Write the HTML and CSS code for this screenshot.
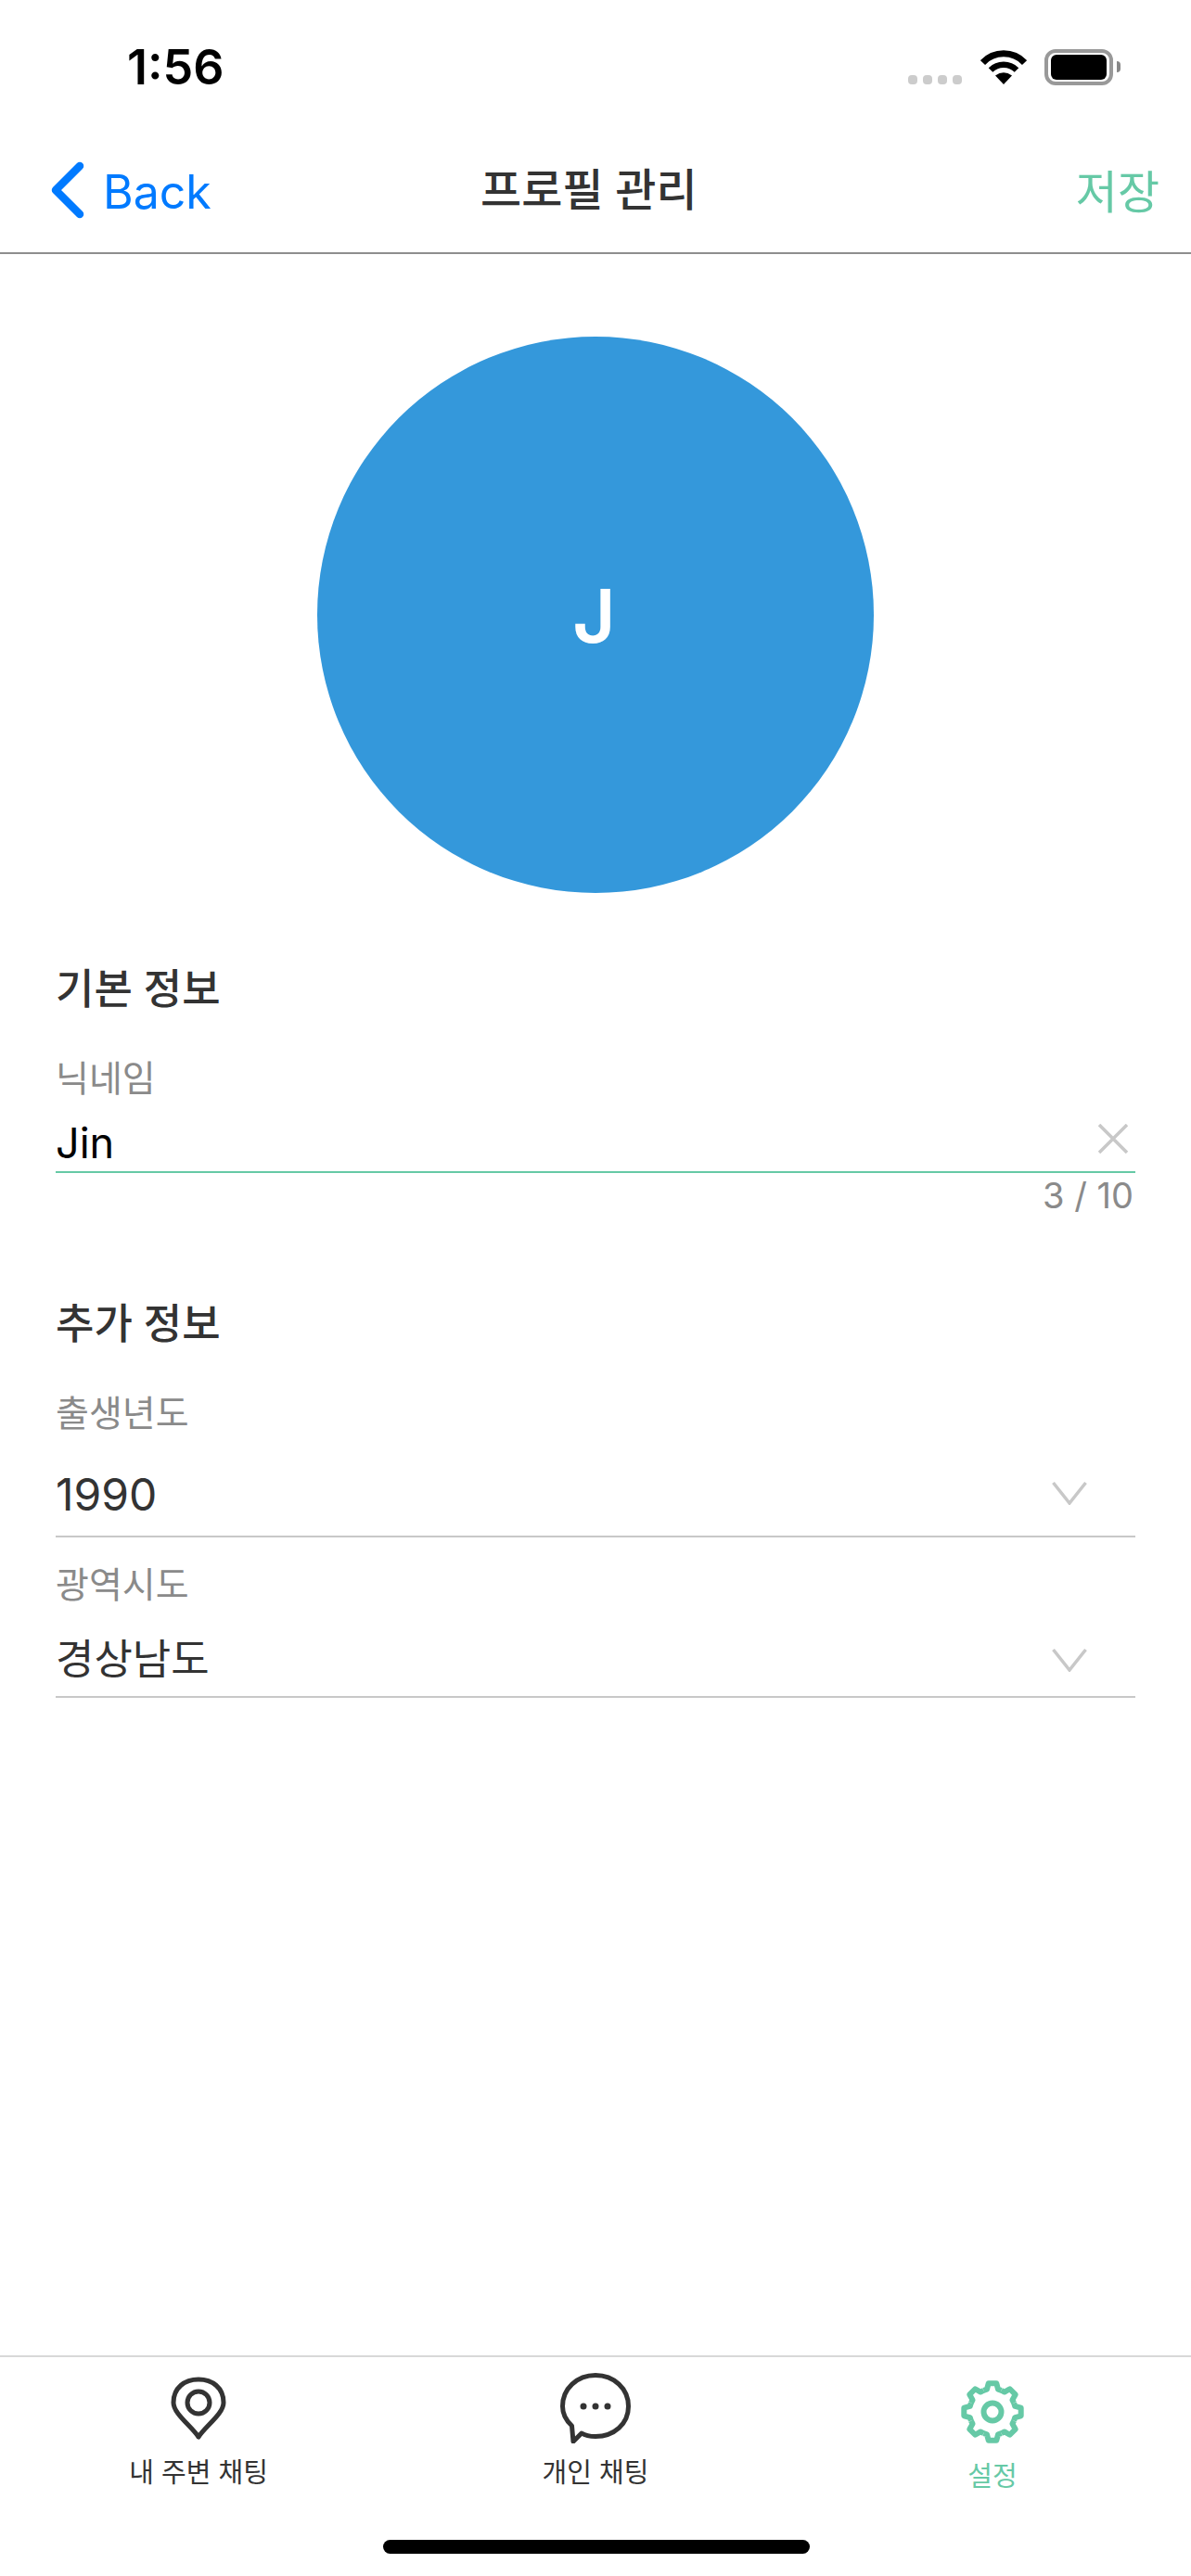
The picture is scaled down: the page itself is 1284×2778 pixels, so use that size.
FILE: index.html

```html
<html>
  <head>
    <meta http-equiv="Content-Type" content="text/html; charset=UTF-8" />
    <title>프로필 관리</title>
    <link rel="stylesheet" href="styles.css">
  </head>
  <body>
  <div class="screen">
    <div class="status">
      <span class="time">1:56</span>
      <div class="status-icons">
        <div class="signal"><i></i><i></i><i></i><i></i></div>
        <svg class="wifi" width="50" height="37" viewBox="0 0 50 37">
          <path d="M2.5 13.5 A31 31 0 0 1 47.5 13.5" fill="none" stroke="#000" stroke-width="7"/>
          <path d="M11 21.5 A20 20 0 0 1 39 21.5" fill="none" stroke="#000" stroke-width="6.5"/>
          <path d="M25 37 L16 27.5 Q25 21 34 27.5 Z" fill="#000"/>
        </svg>
        <div class="battery"><div class="battery-fill"></div></div>
        <div class="battery-nub"></div>
      </div>
    </div>

    <div class="nav">
      <a class="back">
        <svg width="36" height="62" viewBox="0 0 36 62">
          <path d="M31 5 L5 31 L31 57" fill="none" stroke="#007aff" stroke-width="8.500" stroke-linecap="round" stroke-linejoin="round"/>
        </svg>
        <span>Back</span>
      </a>
      <h1 class="title">프로필 관리</h1>
      <a class="save">저장</a>
    </div>

    <div class="avatar-row">
      <div class="avatar">J</div>
    </div>

    <div class="form">
      <h2 class="section first">기본 정보</h2>
      <div class="label nick-label">닉네임</div>
      <div class="input active">
        <span class="value black">Jin</span>
        <svg class="clear" width="34" height="32" viewBox="0 0 34 32">
          <path d="M2 1 L32 31 M32 1 L2 31" fill="none" stroke="#c8c8c8" stroke-width="3.500"/>
        </svg>
      </div>
      <div class="counter">3 / 10</div>

      <h2 class="section">추가 정보</h2>
      <div class="label birth-label">출생년도</div>
      <div class="input select birth">
        <span class="value">1990</span>
        <svg class="chevron" width="38" height="26" viewBox="0 0 38 26">
          <path d="M1.5 2 L19 24 L36.5 2" fill="none" stroke="#c8c8c8" stroke-width="3.500"/>
        </svg>
      </div>
      <div class="label region-label">광역시도</div>
      <div class="input select region">
        <span class="value">경상남도</span>
        <svg class="chevron" width="38" height="26" viewBox="0 0 38 26">
          <path d="M1.5 2 L19 24 L36.5 2" fill="none" stroke="#c8c8c8" stroke-width="3.500"/>
        </svg>
      </div>
    </div>

    <div class="tabs">
      <div class="tab">
        <div class="tab-icon">
          <svg width="60" height="68" viewBox="0 0 60 68">
            <path d="M30 65 C22 53 3 40 3 28 C3 12 15 3 30 3 C45 3 57 12 57 28 C57 40 38 53 30 65 Z" fill="none" stroke="#333" stroke-width="5" stroke-linejoin="round"/>
            <circle cx="30" cy="28" r="12" fill="none" stroke="#333" stroke-width="5"/>
          </svg>
        </div>
        <span>내 주변 채팅</span>
      </div>
      <div class="tab">
        <div class="tab-icon">
          <svg width="76" height="76" viewBox="0 0 76 76">
            <path d="M14 74 L12.5 57 C6 51 2.500 44 2.500 36 C2.500 17 18 2.500 38 2.500 C58 2.500 73.500 17 73.500 36 C73.500 55 58 68.500 38 68.500 C32 68.500 27 67.500 23 65 Z" fill="none" stroke="#333" stroke-width="5" stroke-linejoin="round"/>
            <circle cx="25" cy="36" r="3.500" fill="#333"/>
            <circle cx="38" cy="36" r="3.500" fill="#333"/>
            <circle cx="51" cy="36" r="3.500" fill="#333"/>
          </svg>
        </div>
        <span>개인 채팅</span>
      </div>
      <div class="tab on">
        <div class="tab-icon">
          <svg width="68" height="68" viewBox="0 0 68 68">
            <defs>
              <polyline id="tooth" points="-9.57,-23.1 -6.05,-24.26 -4.3,-30.7 4.3,-30.7 6.05,-24.26 9.57,-23.1" fill="none" stroke="#66c9a6" stroke-width="6" stroke-linejoin="round"/>
            </defs>
            <g transform="translate(34 34)">
              <use href="#tooth"/>
              <use href="#tooth" transform="rotate(45)"/>
              <use href="#tooth" transform="rotate(90)"/>
              <use href="#tooth" transform="rotate(135)"/>
              <use href="#tooth" transform="rotate(180)"/>
              <use href="#tooth" transform="rotate(225)"/>
              <use href="#tooth" transform="rotate(270)"/>
              <use href="#tooth" transform="rotate(315)"/>
              <circle r="9.500" fill="none" stroke="#66c9a6" stroke-width="6"/>
            </g>
          </svg>
        </div>
        <span>설정</span>
      </div>
    </div>
    <div class="home-bar"></div>
  </div>
  </body>
</html>
```

FILE: styles.css

```css
body {
  margin: 0;
  background: #fff;
  font-family: Inter, "Noto Sans CJK KR", sans-serif;
  color: #333;
}
h1, h2 {
  margin: 0;
  font-weight: 500;
}
.screen {
  width: 1284px;
  height: 2778px;
  display: flex;
  flex-direction: column;
  overflow: hidden;
}

/* status bar */
.status {
  height: 132px;
  display: flex;
  justify-content: space-between;
  box-sizing: border-box;
  padding: 43px 76px 0 137px;
}
.time {
  font-size: 52px;
  font-weight: 600;
  line-height: 60px;
  color: #000;
}
.status-icons {
  display: flex;
  height: 40px;
  margin-top: 10px;
}
.signal {
  display: flex;
  gap: 6px;
  margin-top: 28px;
  margin-right: 20px;
}
.signal i {
  width: 10px;
  height: 10px;
  border-radius: 4px;
  background: #ccc;
}
.wifi {
  margin-top: 1px;
  margin-right: 19px;
}
.battery {
  width: 74px;
  height: 39px;
  box-sizing: border-box;
  border: 4px solid #999;
  border-radius: 12px;
  padding: 2px 3px;
}
.battery-fill {
  height: 100%;
  background: #000;
  border-radius: 6px;
}
.battery-nub {
  width: 4px;
  height: 12px;
  margin: 13px 0 0 4px;
  background: #888;
  border-radius: 0 6px 6px 0;
}

/* nav */
.nav {
  height: 142px;
  box-sizing: border-box;
  border-bottom: 2px solid #8e8e8e;
  display: grid;
  grid-template-columns: 463px 1fr auto;
  align-items: center;
  padding: 0 34px 0 55px;
}
.back {
  display: flex;
  align-items: center;
  gap: 20px;
  color: #007aff;
  font-size: 50px;
  padding-top: 6px;
}
.back span {
  padding-top: 4px;
}
.back svg {
  display: block;
}
.title {
  font-size: 48px;
  line-height: 60px;
  color: #333;
  padding-top: 6px;
}
.save {
  font-size: 49px;
  color: #66c9a6;
  padding-top: 3px;
}

/* avatar */
.avatar-row {
  display: flex;
  justify-content: center;
  padding-top: 89px;
}
.avatar {
  width: 600px;
  height: 600px;
  border-radius: 50%;
  background: #3498db;
  color: #fff;
  font-size: 80px;
  font-weight: 600;
  display: flex;
  align-items: center;
  justify-content: center;
  padding-right: 3px;
  box-sizing: border-box;
}

/* form */
.form {
  padding: 0 60px;
}
.section {
  font-size: 45px;
  line-height: 60px;
  color: #333;
  margin-top: 87px;
}
.section.first {
  margin-top: 74px;
}
.label {
  font-size: 39px;
  line-height: 50px;
  color: #8a8a8a;
}
.nick-label {
  margin-top: 41px;
}
.birth-label {
  margin-top: 41px;
}
.region-label {
  margin-top: 26px;
}
.input {
  display: flex;
  justify-content: space-between;
  box-sizing: border-box;
}
.input.active {
  height: 77px;
  border-bottom: 2px solid #66c9a6;
  padding: 15px 7px 0 0;
}
.value {
  font-size: 45px;
  line-height: 60px;
  color: #333;
}
.value.black {
  color: #000;
}
.birth .value {
  font-size: 48px;
}
.counter {
  text-align: right;
  font-size: 38px;
  line-height: 44px;
  color: #8a8a8a;
  margin-top: 2px;
  padding-right: 2px;
}
.select {
  border-bottom: 2px solid #c8c8c8;
  padding-right: 52px;
}
.select.birth {
  height: 90px;
  margin-top: 19px;
  padding-top: 14px;
}
.select.region {
  height: 85px;
  margin-top: 12px;
  padding-top: 14px;
}
.chevron {
  margin-top: 15px;
}
.region .chevron {
  margin-top: 17px;
}
.clear {
  margin-top: 9px;
}

/* tab bar */
.tabs {
  margin-top: auto;
  height: 238px;
  box-sizing: border-box;
  border-top: 2px solid #d8d8d8;
  display: grid;
  grid-template-columns: repeat(3, 1fr);
}
.tab {
  display: flex;
  flex-direction: column;
  align-items: center;
  font-size: 29px;
  line-height: 40px;
  color: #333;
}
.tab-icon {
  height: 100px;
  display: flex;
  align-items: center;
  padding-top: 5px;
}
.tab.on {
  color: #66c9a6;
  padding-top: 4px;
}
.home-bar {
  position: absolute;
  left: 413px;
  top: 2739px;
  width: 460px;
  height: 15px;
  border-radius: 8px;
  background: #000;
}
```
